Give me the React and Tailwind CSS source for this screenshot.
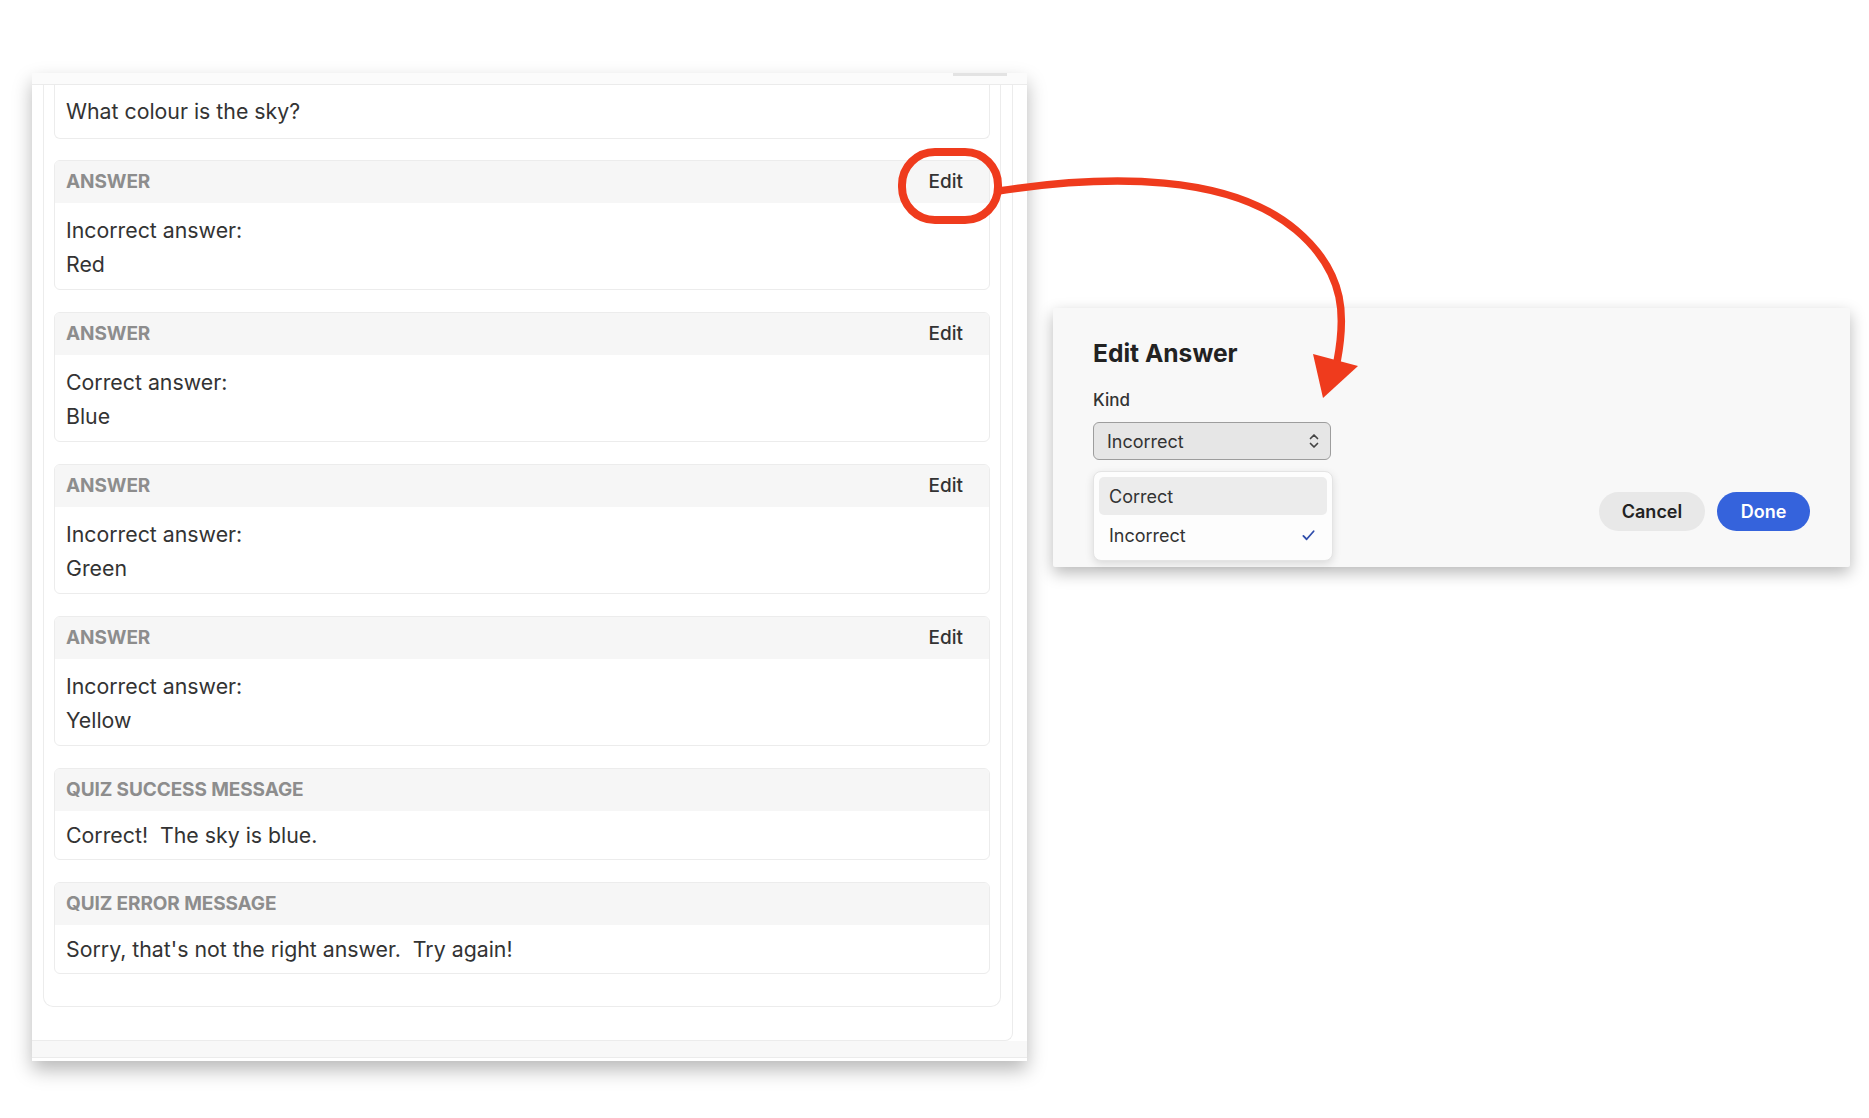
const answers = [
  { kind: 'Incorrect', value: 'Red' },
  { kind: 'Correct', value: 'Blue' },
  { kind: 'Incorrect', value: 'Green' },
  { kind: 'Incorrect', value: 'Yellow' }
];

function Card({ label, edit, children, bodyClass }) {
  return (
    <div className="rounded-[6px] border border-[#ececec] overflow-hidden bg-white">
      <div className="h-[42px] bg-[#f6f6f6] flex items-center justify-between pl-[11px] pr-[26px]">
        <span className="text-[19px] font-bold text-[#8d8d8d] tracking-[-0.1px]">{label}</span>
        {edit && <span className="text-[19px] font-medium text-[#333]">Edit</span>}
      </div>
      <div className={bodyClass}>{children}</div>
    </div>
  );
}

function QuizPanel() {
  return (
    <div className="ml-[32px] mt-[73px] w-[995px] h-[988px] flex flex-col bg-white shadow-[0_9px_18px_rgba(0,0,0,0.28)]">
      {/* top strip */}
      <div className="h-[12px] shrink-0 bg-[#fbfbfb] border-b border-[#ebebeb] flex justify-end">
        <div className="w-[54px] h-[3px] bg-[#e3e3e3] mr-[20px]" />
      </div>

      <div className="flex-1 flex">
        <div className="w-[981px] border-r border-b border-[#ececec] rounded-br-[8px] pl-[11px] pr-[11px] pb-[33px] flex flex-col">
          <div className="flex-1 border-l border-r border-b border-[#ececec] rounded-b-[10px] px-[10px] pb-[32px] flex flex-col gap-[22px]">
            {/* question card, scrolled so its top is cut off */}
            <div className="h-[54px] -mb-[1px] border-l border-r border-b border-[#ececec] rounded-b-[6px] pl-[11px] flex items-center text-[21.3px] text-[#333]">
              What colour is the sky?
            </div>

            {answers.map((a, i) => (
              <Card key={i} label="ANSWER" edit bodyClass="px-[11px] pt-[10px] pb-[8px] text-[21.3px] leading-[34px] text-[#333]">
                <p>{a.kind} answer:</p>
                <p>{a.value}</p>
              </Card>
            ))}

            <Card label="QUIZ SUCCESS MESSAGE" bodyClass="px-[11px] py-[7px] text-[21.3px] leading-[34px] text-[#333]">
              <p className="whitespace-pre">Correct!  The sky is blue.</p>
            </Card>

            <Card label="QUIZ ERROR MESSAGE" bodyClass="px-[11px] py-[7px] text-[21.3px] leading-[34px] text-[#333]">
              <p className="whitespace-pre">Sorry, that's not the right answer.  Try again!</p>
            </Card>
          </div>
        </div>
      </div>

      {/* bottom strip */}
      <div className="h-[20px] shrink-0 flex flex-col">
        <div className="h-[17px] bg-[#f8f8f8] border-b border-[#ebebeb]" />
      </div>
    </div>
  );
}

function EditAnswerDialog() {
  return (
    <div className="ml-[26px] mt-[308px] w-[797px] h-[259px] bg-[#f8f8f8] rounded-[2px] shadow-[0_6px_16px_rgba(0,0,0,0.28)] px-[40px] pt-[31px] flex flex-col">
      <h2 className="text-[24.6px] leading-[29px] font-bold text-[#222]">Edit Answer</h2>
      <div className="mt-[21px] text-[17px] leading-[22px] font-medium text-[#333]">Kind</div>

      <div className="relative mt-[11px] w-[238px]">
        <div className="h-[38px] rounded-[6px] border border-[#9d9d9d] bg-[#e6e6e6] flex items-center justify-between pl-[13px] pr-[10px]">
          <span className="text-[18px] text-[#333]">Incorrect</span>
          <svg width="12" height="18" viewBox="0 0 12 18" fill="none" stroke="#444" strokeWidth="1.7" strokeLinecap="round" strokeLinejoin="round">
            <path d="M2.5 6.5 L6 3 L9.5 6.5" />
            <path d="M2.5 11.5 L6 15 L9.5 11.5" />
          </svg>
        </div>

        {/* open menu */}
        <div className="absolute left-0 top-[49px] w-[240px] rounded-[8px] border border-[#e4e4e4] bg-[#fdfdfd] shadow-[0_3px_8px_rgba(0,0,0,0.12)] p-[5px] flex flex-col z-10">
          <div className="h-[38px] rounded-[5px] bg-[#ececec] flex items-center pl-[10px] text-[18px] text-[#333]">Correct</div>
          <div className="h-[40px] flex items-center justify-between pl-[10px] pr-[11px] text-[18px] text-[#333]">
            <span>Incorrect</span>
            <svg width="15" height="15" viewBox="0 0 16 16" fill="none" stroke="#2f4dab" strokeWidth="1.9" strokeLinecap="round" strokeLinejoin="round">
              <path d="M2.5 8.5 L6 12 L13.5 3.5" />
            </svg>
          </div>
        </div>
      </div>

      <div className="mt-[32px] flex justify-end gap-[12px]">
        <button className="h-[39px] w-[106px] rounded-full bg-[#e8e8e8] text-[18px] font-semibold text-[#222]">Cancel</button>
        <button className="h-[39px] w-[93px] rounded-full bg-[#3563dc] text-[18px] font-semibold text-white">Done</button>
      </div>
    </div>
  );
}

export default function App() {
  return (
    <div className="relative w-[1869px] h-[1118px] overflow-hidden bg-white font-['Inter',sans-serif] flex items-start">
      <QuizPanel />
      <EditAnswerDialog />

      {/* annotation: circle + arrow */}
      <svg className="absolute inset-0 pointer-events-none" width="1869" height="1118" viewBox="0 0 1869 1118" fill="none">
        <rect x="902" y="152" width="96" height="68" rx="33" stroke="#ef3b1d" strokeWidth="8" />
        <path d="M998 191 C1110 174 1230 174 1296 230 C1348 274 1345 320 1337 362" stroke="#ef3b1d" strokeWidth="7.5" strokeLinecap="round" />
        <polygon points="1313,354 1358,366 1323,398" fill="#ef3b1d" />
      </svg>
    </div>
  );
}
